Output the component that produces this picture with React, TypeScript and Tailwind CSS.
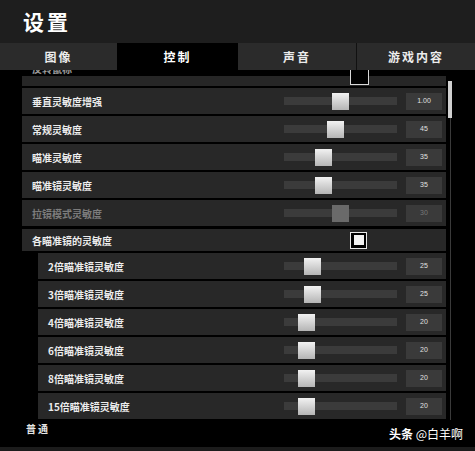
import React from "react";

type Row = { label: string; value?: string; pos?: number; sub?: boolean; disabled?: boolean; checkbox?: boolean };

const rows: Row[] = [
  { label: "垂直灵敏度增强", value: "1.00", pos: 340 },
  { label: "常规灵敏度", value: "45", pos: 335 },
  { label: "瞄准灵敏度", value: "35", pos: 323 },
  { label: "瞄准镜灵敏度", value: "35", pos: 323 },
  { label: "拉镜模式灵敏度", value: "30", pos: 340, disabled: true },
  { label: "各瞄准镜的灵敏度", checkbox: true },
  { label: "2倍瞄准镜灵敏度", value: "25", pos: 312, sub: true },
  { label: "3倍瞄准镜灵敏度", value: "25", pos: 312, sub: true },
  { label: "4倍瞄准镜灵敏度", value: "20", pos: 306, sub: true },
  { label: "6倍瞄准镜灵敏度", value: "20", pos: 306, sub: true },
  { label: "8倍瞄准镜灵敏度", value: "20", pos: 306, sub: true },
  { label: "15倍瞄准镜灵敏度", value: "20", pos: 306, sub: true },
];

const font = { fontFamily: '"Noto Sans CJK SC", "Noto Sans", sans-serif' };

function Slider({ pos, disabled }: { pos: number; disabled?: boolean }) {
  const left = pos - 284 - 8;
  return (
    <div className="relative w-[113px] h-[17px] flex items-center">
      <div className="w-full h-[8px] bg-[#3b3b3b]" />
      <div
        className={
          disabled
            ? "absolute top-0 w-[17px] h-[17px] bg-[#6a6a6a]"
            : "absolute top-0 w-[17px] h-[17px] bg-gradient-to-b from-[#f2f2f2] to-[#b5b5b5]"
        }
        style={{ left }}
      />
    </div>
  );
}

function Checkbox() {
  return (
    <div className="w-[17px] h-[17px] border-[1.5px] border-[#e8e8e8] bg-black flex items-center justify-center">
      <div className="w-[10px] h-[10px] bg-[#f2f2f2]" />
    </div>
  );
}

function SettingRow({ r }: { r: Row }) {
  return (
    <div
      className={`flex items-center bg-[#282828] shrink-0 ${r.sub ? "ml-[16px]" : ""} ${
        r.checkbox ? "h-[22px] mt-[1px]" : "h-[26px]"
      }`}
    >
      <div
        className={`flex-1 text-[10px] font-bold ${r.sub ? "pl-[10px]" : "pl-[10px]"} ${
          r.disabled ? "text-[#7c7c7c]" : "text-[#ececec]"
        }`}
      >
        {r.label}
      </div>
      {r.checkbox ? (
        <div className="w-[162px] flex">
          <div className="ml-[66px]">
            <Checkbox />
          </div>
        </div>
      ) : (
        <div className="flex items-center">
          <Slider pos={r.pos!} disabled={r.disabled} />
          <div
            className={`ml-[9px] mr-[4px] w-[36px] h-[17px] bg-[#3a3a3a] flex items-center justify-center text-[7px] ${
              r.disabled ? "text-[#777]" : "text-[#e0e0e0]"
            }`}
            style={{ fontFamily: '"Liberation Sans", sans-serif' }}
          >
            {r.value}
          </div>
        </div>
      )}
    </div>
  );
}

export default function App() {
  return (
    <div className="w-[475px] h-[451px] bg-black flex flex-col overflow-hidden" style={font}>
      <div className="h-[43px] bg-[#1e1e1e] flex items-center pl-[23px] shrink-0">
        <span className="text-white text-[21px] font-bold tracking-[3px]">设置</span>
      </div>
      <div className="h-[27px] flex shrink-0 bg-black">
        <div className="w-[117px] bg-[#2b2b2b] flex items-center justify-center text-[#ececec] text-[12px] font-bold tracking-[2px]">
          图像
        </div>
        <div className="w-[121px] bg-black flex items-center justify-center text-white text-[12px] font-bold tracking-[2px]">
          控制
        </div>
        <div className="w-[118px] bg-[#2b2b2b] flex items-center justify-center text-[#ececec] text-[12px] font-bold tracking-[2px]">
          声音
        </div>
        <div className="w-[1px] bg-[#111]" />
        <div className="flex-1 bg-[#2b2b2b] flex items-center justify-center text-[#ececec] text-[12px] font-bold tracking-[2px]">
          游戏内容
        </div>
      </div>
      <div className="relative flex-1 flex overflow-hidden">
        <div className="w-[22px] shrink-0" />
        <div className="w-[424px] shrink-0 flex flex-col gap-[2px]">
          <div className="relative flex h-[16px] shrink-0 overflow-hidden">
            <div className="absolute left-0 right-0 top-[6px] bottom-0 bg-[#262626]" />
            <div className="relative flex-1 text-[10px] font-bold pl-[10px] text-[#9a9a9a] -mt-[8px] leading-[14px]">
              反转鼠标
            </div>
            <div className="relative w-[162px] flex">
              <div className="ml-[66px] -mt-[4px] w-[19px] h-[19px] border-[1.5px] border-[#d8d8d8] bg-black" />
            </div>
          </div>
          {rows.map((r) => (
            <SettingRow key={r.label} r={r} />
          ))}
          <div className="h-[14px] pl-[4px] text-[10px] font-bold text-[#e6e6e6] pt-[1px] leading-[14px] tracking-[2px]">
            普通
          </div>
        </div>
        <div className="flex-1 relative">
          <div className="absolute left-[2px] top-[11px] w-[4px] h-[37px] bg-[#d0d0d0]" />
          <div className="absolute left-[4px] top-[48px] w-[1px] h-[302px] bg-[#3a3a3a]" />
        </div>
        <div
          className="absolute right-[12px] bottom-[4px] text-white text-[12px] font-bold"
          style={{ fontFamily: '"Noto Sans CJK SC", sans-serif' }}
        >
          头条 <span className="font-normal">@白羊啊</span>
        </div>
      </div>
      <div className="h-[4px] bg-[#1c1c1c] shrink-0" />
    </div>
  );
}
